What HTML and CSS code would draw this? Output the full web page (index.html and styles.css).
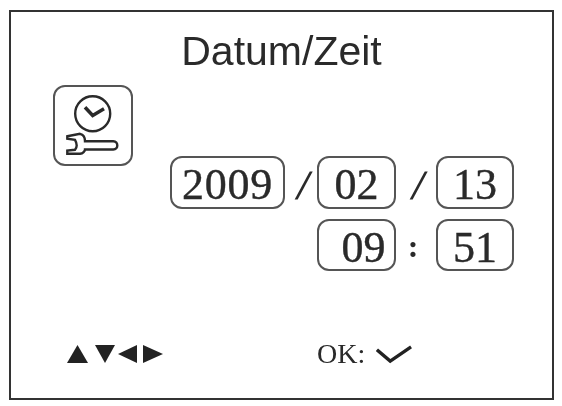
FILE: index.html
```html
<!DOCTYPE html>
<html lang="de">
<head>
<meta charset="utf-8">
<title>Datum/Zeit</title>
<link rel="stylesheet" href="styles.css">
</head>
<body>
<main class="frame">
  <h1 class="title">Datum/Zeit</h1>
  <section class="content">
    <div class="icon-box">
      <svg class="icon" viewBox="1 0.5 76 77" aria-hidden="true">
        <circle cx="38.7" cy="27.3" r="17.5"/>
        <path class="hands" d="M31 20.7 38.7 29 50 22.3"/>
        <path d="M13.3 49.7 26 47.3C29 48 31 51 31 54.7H59.3C62 54.7 63.3 57 63.3 59S62 63 59.3 63H31C31 64.5 29 67 26 67.3H13.3V64L21 63.3C22 62 22.7 60.5 22.7 59S22 55 21 53.3L13.3 52.3Z"/>
      </svg>
    </div>
    <div class="fields">
      <div class="field year">2009</div>
      <div class="sep slash">/</div>
      <div class="field">02</div>
      <div class="sep slash">/</div>
      <div class="field">13</div>
      <div class="field hour">09</div>
      <div class="sep colon">:</div>
      <div class="field">51</div>
    </div>
  </section>
  <footer class="footer">
    <svg class="arrows" viewBox="0 0 96 18" aria-hidden="true">
      <path d="M10.5 0 21 18H0Z"/>
      <path d="M28 0H48L38 18Z"/>
      <path d="M51 9 70 0V18Z"/>
      <path d="M76 0 96 9 76 18Z"/>
    </svg>
    <span class="ok">OK:</span>
    <svg class="check" viewBox="0 0 38 20" aria-hidden="true">
      <path d="M1 5 15 17 37 2"/>
    </svg>
  </footer>
</main>
</body>
</html>
```
FILE: styles.css
```css
html, body {
  margin: 0;
  padding: 0;
  background: #fff;
}

body {
  width: 562px;
  height: 406px;
  overflow: hidden;
}

.frame {
  box-sizing: border-box;
  width: 545px;
  height: 390px;
  margin: 10px 0 0 9px;
  border: 2px solid #333;
  display: flex;
  flex-direction: column;
  color: #2a2a2a;
  filter: blur(0.6px);
}

.title {
  margin: 19px 0 0;
  text-align: center;
  font: 400 41px/40px "Liberation Sans", Arial, sans-serif;
}

.content {
  display: flex;
  align-items: flex-start;
  margin: 14px 0 0 42px;
}

.icon-box {
  box-sizing: border-box;
  width: 80px;
  height: 81px;
  border: 2px solid #555;
  border-radius: 12px;
  flex: none;
}

.icon {
  display: block;
  width: 76px;
  height: 77px;
  fill: none;
  stroke: #2a2a2a;
  stroke-width: 2.4;
}

.icon .hands {
  stroke-width: 3.5;
}

.fields {
  display: grid;
  grid-template-columns: 115px 32px 79px 40px 78px;
  grid-template-rows: 53px 52px;
  row-gap: 10px;
  margin: 71px 0 0 37px;
}

.field {
  box-sizing: border-box;
  border: 2px solid #555;
  border-radius: 12px;
  text-align: center;
  font: 400 44px/54px "Liberation Serif", "Times New Roman", serif;
  -webkit-text-stroke: 0.4px #2a2a2a;
}

.year {
  letter-spacing: 0.8px;
}

.hour {
  grid-column: 3;
  padding-left: 14px;
}

.sep {
  text-align: center;
}

.slash {
  padding-left: 7px;
  font: 400 38px/60px "Liberation Sans", Arial, sans-serif;
  transform: skewX(-15deg);
}

.colon {
  padding-right: 6px;
  font: 700 32px/55px "Liberation Serif", serif;
}

.footer {
  display: flex;
  align-items: center;
  margin-top: auto;
  margin-bottom: 29px;
  padding-left: 56px;
}

.arrows {
  width: 96px;
  height: 18px;
  fill: #222;
  flex: none;
}

.ok {
  margin-left: 154px;
  font: 400 28px/30px "Liberation Serif", serif;
}

.check {
  width: 36px;
  height: 19px;
  margin: 0 0 0 11px;
  fill: none;
  stroke: #222;
  stroke-width: 3.5;
  flex: none;
}
```
